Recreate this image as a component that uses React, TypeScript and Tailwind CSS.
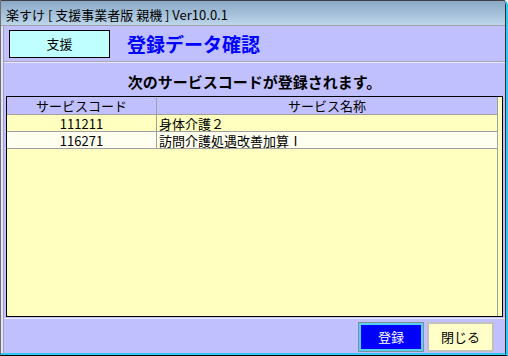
import React from "react";

const rows = [
  { code: "111211", name: "身体介護２", bg: "bg-[#ffffc0]" },
  { code: "116271", name: "訪問介護処遇改善加算Ⅰ", bg: "bg-[#fffff0]" },
];

const App = () => {
  return (
    <div
      className="w-[508px] h-[356px] flex flex-col bg-[#c0c0ff] border-t border-t-[#404040] border-l border-l-[#707070] border-r-2 border-r-[#30c8f0] border-b border-b-black rounded-tr-[5px] overflow-hidden text-black"
      style={{ fontFamily: '"Noto Sans CJK JP", "Liberation Sans", sans-serif' }}
    >
      <div className="flex-1 flex flex-col border-r border-r-[#303030] border-b-2 border-b-[#30c8f0] rounded-tr-[4px] overflow-hidden">
        {/* Title bar */}
        <div className="h-[25px] shrink-0 flex items-center pl-[5px] pt-[3px] text-[13px] leading-none bg-gradient-to-b from-[#8aa8c6] to-[#bcd6ea] border-b border-b-[#a0a0a8]">
          楽すけ [ 支援事業者版 親機 ] Ver10.0.1
        </div>

        {/* Body */}
        <div className="flex-1 flex flex-col border-l-2 border-l-[#e4e4ff]">
          <div className="flex-1 flex flex-col border-l border-l-[#a0a0b0]">
            {/* Header */}
            <div className="h-[36px] shrink-0 flex items-center pl-[5px] border-b border-b-[#a8a8b8]">
              <div className="w-[101px] h-[28px] flex items-center justify-center bg-[#c0ffff] border border-black text-[13px]">
                支援
              </div>
              <div className="ml-[17px] text-[19px] font-bold leading-none text-[#0000ff]">
                登録データ確認
              </div>
            </div>

            {/* Main */}
            <div className="flex-1 flex flex-col border-t border-t-[#e8e8ff]">
              <div className="h-[33px] shrink-0 flex items-center justify-center pt-[3px] text-[15px] font-bold leading-none">
                次のサービスコードが登録されます。
              </div>
              <div className="ml-[2px] mr-[2px] h-[221px] border border-black bg-[#ffffc0]">
                <div className="w-[491px] h-full border-r border-r-[#a0a0a0] flex flex-col">
                  <div className="grid grid-cols-[150px_1fr] h-[18px] bg-[#c0c0ff] border-b border-b-[#a0a0a0] text-[13px] leading-none">
                    <div className="flex items-center justify-center border-r border-r-[#a0a0a0]">
                      サービスコード
                    </div>
                    <div className="flex items-center justify-center">サービス名称</div>
                  </div>
                  {rows.map((r) => (
                    <div
                      key={r.code}
                      className={`grid grid-cols-[150px_1fr] h-[17px] border-b border-b-[#a0a0a0] text-[13px] leading-none ${r.bg}`}
                    >
                      <div className="flex items-center justify-center border-r border-r-[#a0a0a0]">
                        {r.code}
                      </div>
                      <div className="flex items-center pl-[2px]">{r.name}</div>
                    </div>
                  ))}
                </div>
              </div>
            </div>

            {/* Footer */}
            <div className="h-[35px] shrink-0 flex items-start justify-end gap-[3px] pr-[11px] pt-[3px] border-t border-t-[#ececff] mt-[1px]">
              <button className="w-[66px] h-[30px] flex items-center justify-center bg-[#0000ff] text-white text-[13px] border border-[#7890a0] shadow-[inset_0_0_0_2px_#5ad0f0]">
                登録
              </button>
              <button className="w-[67px] h-[30px] flex items-center justify-center bg-[#ffffc8] text-[13px] border-2 border-[#c0c0c0]">
                閉じる
              </button>
            </div>
          </div>
        </div>
      </div>
    </div>
  );
};

export default App;
